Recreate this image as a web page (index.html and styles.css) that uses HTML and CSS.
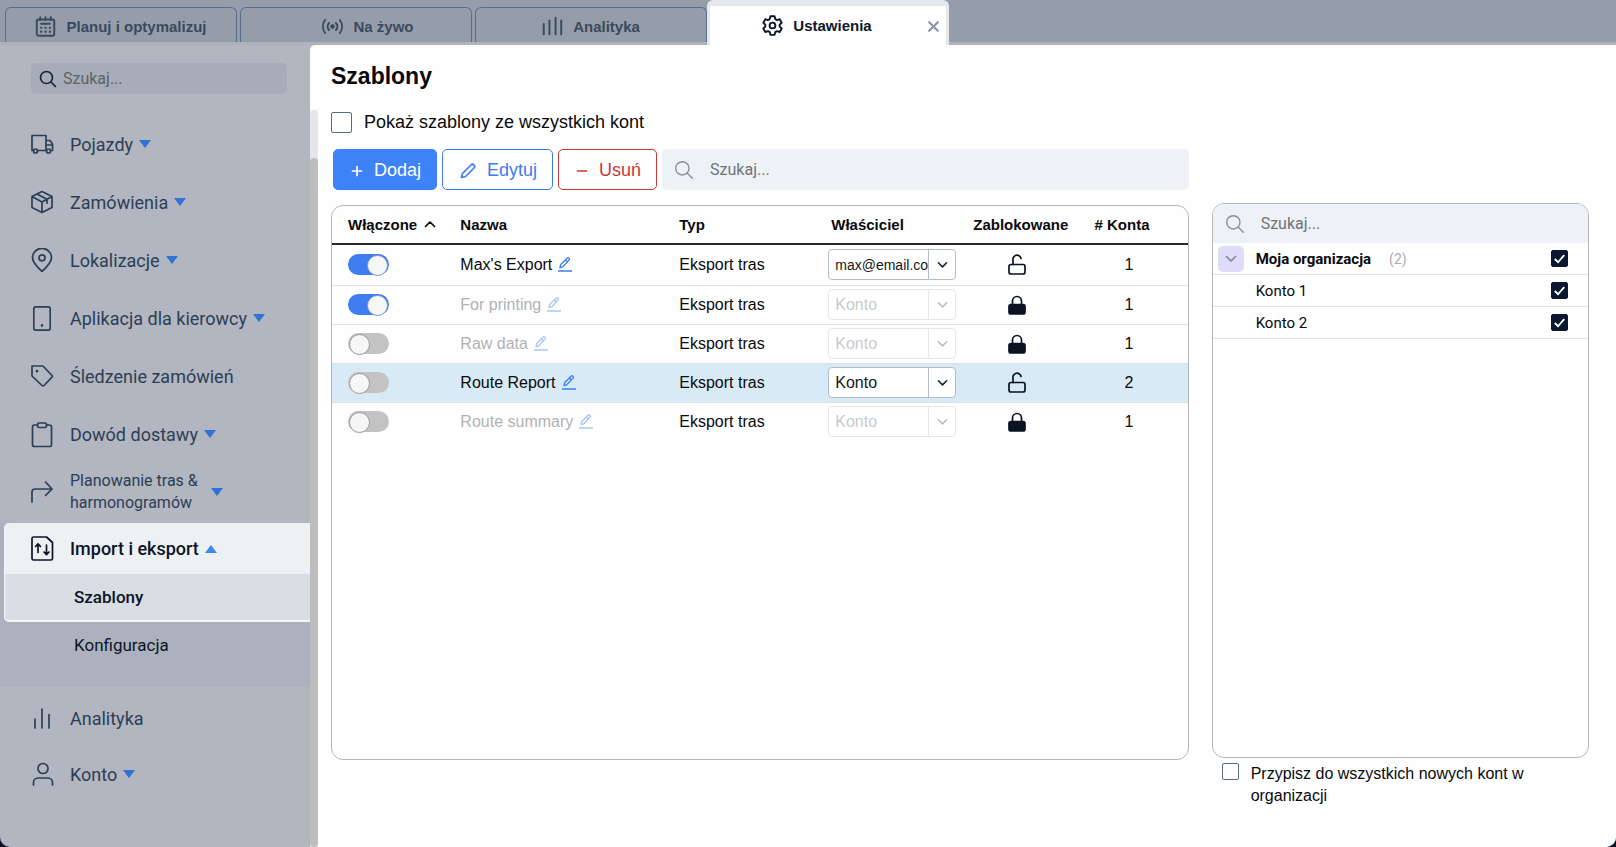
FILE: index.html
```
<!DOCTYPE html>
<html lang="pl">
<head>
	<meta charset="utf-8">
	<meta name="viewport" content="width=device-width, initial-scale=1">
	<title>Szablony</title>
	<link rel="stylesheet" href="styles.css">
</head>
<body>

<!-- icons -->
<svg class="sprite" aria-hidden="true">
	<symbol id="i-search" viewBox="0 0 24 24"><circle cx="10" cy="10" r="8"/><path d="M16 16l6 6"/></symbol>
	<symbol id="i-calendar" viewBox="0 0 24 24"><rect x="2" y="4" width="20" height="18.500" rx="2"/><path d="M6 1.500v3M18 1.500v3M12 1.500v3M7 8.800h10"/><path d="M7 13.500h.2M12 13.500h.2M17 13.500h.2M7 18h.2M12 18h.2M17 18h.2" stroke-width="2.600"/></symbol>
	<symbol id="i-live" viewBox="0 0 24 24"><circle cx="12" cy="12" r="1.500" fill="currentColor"/><path d="M8 8a6 6 0 0 0 0 8M16 8a6 6 0 0 1 0 8M3.500 4.500a13 13 0 0 0 0 15M20.500 4.500a13 13 0 0 1 0 15"/></symbol>
	<symbol id="i-bars4" viewBox="0 0 24 24"><path d="M2 9v12M8.500 5v16M15.500 2v19M22 5v16"/></symbol>
	<symbol id="i-gear" viewBox="0 0 24 24"><circle cx="12" cy="12" r="3.300"/><path d="M9.600 1.500h4.800l.7 3.100 2 1.200 3.100-1 2.300 4-2.300 2.200v2.200l2.300 2.200-2.300 4-3.100-1-2 1.200-.7 3.100H9.600l-.7-3.100-2-1.200-3.100 1-2.300-4 2.300-2.200v-2.200L1.500 8.800l2.300-4 3.100 1 2-1.200z"/></symbol>
	<symbol id="i-close" viewBox="0 0 24 24"><path d="M4 4l16 16M20 4L4 20"/></symbol>
	<symbol id="i-truck" viewBox="0 0 24 24"><path d="M3.500 18.500H2V3.500h14v15H7.500M16 8.500h4l2.500 3.500v6.500h-1.500M16 13h6.500"/><circle cx="5.500" cy="19" r="2"/><circle cx="18.500" cy="19" r="2"/></symbol>
	<symbol id="i-box" viewBox="0 0 24 24"><path d="M12 1.500l10 5v11l-10 5-10-5v-11zM2 6.500l10 5.500 10-5.500M12 12v10.500M7 4l10 5.200v4"/></symbol>
	<symbol id="i-pin" viewBox="0 0 24 24"><path d="M12 23.500C6 18 2.500 14 2.500 9.800a9.500 9.500 0 0 1 19 0C21.500 14 18 18 12 23.500z"/><circle cx="12" cy="9.800" r="3"/></symbol>
	<symbol id="i-phone" viewBox="0 0 24 28"><rect x="3.500" y="2" width="17" height="24" rx="2"/><path d="M12 21v.2" stroke-width="2.500"/></symbol>
	<symbol id="i-tag" viewBox="0 0 24 24"><path d="M2 2h11l9 9.500c.5.500.5 1.200 0 1.700L14 21.500c-.6.600-1.500.6-2 0L2 12z"/><path d="M7 7v.2" stroke-width="2.600"/></symbol>
	<symbol id="i-clip" viewBox="0 0 24 26"><path d="M7.500 3.500H4.500a2 2 0 0 0-2 2V23a2 2 0 0 0 2 2h15a2 2 0 0 0 2-2V5.500a2 2 0 0 0-2-2h-3"/><rect x="7.500" y="1.500" width="9" height="4.500" rx="1.500"/></symbol>
	<symbol id="i-turn" viewBox="0 0 24 24"><path d="M2 22V12a3 3 0 0 1 3-3h17M15.500 2l6.500 7-6.500 6.500"/></symbol>
	<symbol id="i-impexp" viewBox="0 0 24 26"><path d="M3.500 1.500h13l6 5.500v16a1.500 1.500 0 0 1-1.500 1.500H3.500A1.500 1.500 0 0 1 2 23V3a1.500 1.500 0 0 1 1.500-1.500zM8 17V8.500M5.500 11L8 8.300l2.500 2.700M16.500 9.500V19M14 16.500l2.500 2.700 2.500-2.700"/></symbol>
	<symbol id="i-bars3" viewBox="0 0 24 24"><path d="M5 13v9M12 3v19M19 8.500v13.500"/></symbol>
	<symbol id="i-user" viewBox="0 0 24 24"><circle cx="13" cy="6.500" r="5"/><path d="M3.500 23v-2.500a4.500 4.500 0 0 1 4.500-4.500h10a4.500 4.500 0 0 1 4.500 4.500V23"/></symbol>
	<symbol id="i-down" viewBox="0 0 12 8"><path d="M0 0h12L6 8z"/></symbol>
	<symbol id="i-up" viewBox="0 0 12 8"><path d="M0 8h12L6 0z"/></symbol>
	<symbol id="i-chev" viewBox="0 0 12 8"><path d="M1.500 1.500L6 6l4.500-4.500"/></symbol>
	<symbol id="i-chevup" viewBox="0 0 12 8"><path d="M1.500 6.500L6 2l4.500 4.500"/></symbol>
	<symbol id="i-pencil" viewBox="0 0 16 16"><path d="M1.500 14.500l1-4 8.500-8.500a2 2 0 0 1 3 3L5.500 13.500z"/></symbol>
	<symbol id="i-edit" viewBox="0 0 14 15"><path d="M2 10.500l.8-3L9 1.300a1.200 1.200 0 0 1 2 1.800L4.800 9.800zM7.500 3l2 2M0 14h14"/></symbol>
	<symbol id="i-plus" viewBox="0 0 12 12"><path d="M6 1.500v9M1.500 6h9"/></symbol>
	<symbol id="i-minus" viewBox="0 0 12 12"><path d="M1.500 6h9"/></symbol>
	<symbol id="i-unlock" viewBox="0 0 20 22"><rect x="2" y="10.500" width="16" height="9.500" rx="2"/><path d="M6 10.500V6a4 4 0 0 1 8-1.500"/></symbol>
	<symbol id="i-lock" viewBox="0 0 20 22"><rect x="2" y="10.500" width="16" height="9.500" rx="2" fill="currentColor"/><path d="M5.500 10.500V7a4.500 4.500 0 0 1 9 0v3.500"/></symbol>
</svg>

<div class="app">
	<nav class="tabs">
		<button type="button" class="tab"><svg class="icon tab-icon"><use href="#i-calendar"/></svg>Planuj i optymalizuj</button>
		<button type="button" class="tab tab-live"><svg class="icon tab-icon"><use href="#i-live"/></svg>Na żywo</button>
		<button type="button" class="tab"><svg class="icon tab-icon"><use href="#i-bars4"/></svg>Analityka</button>
		<div class="tab-active">
			<button type="button" class="tab-label"><svg class="icon tab-icon"><use href="#i-gear"/></svg>Ustawienia</button>
			<button type="button" class="tab-close" aria-label="Zamknij"><svg class="icon"><use href="#i-close"/></svg></button>
		</div>
	</nav>

	<div class="page">
		<aside class="sidebar">
			<label class="side-search">
				<svg class="icon"><use href="#i-search"/></svg>
				<input type="text" placeholder="Szukaj..." aria-label="Szukaj w menu">
			</label>
			<ul class="menu">
				<li><a class="item" href="#"><svg class="icon"><use href="#i-truck"/></svg><span>Pojazdy</span><svg class="arrow"><use href="#i-down"/></svg></a></li>
				<li><a class="item" href="#"><svg class="icon"><use href="#i-box"/></svg><span>Zamówienia</span><svg class="arrow"><use href="#i-down"/></svg></a></li>
				<li><a class="item" href="#"><svg class="icon"><use href="#i-pin"/></svg><span>Lokalizacje</span><svg class="arrow"><use href="#i-down"/></svg></a></li>
				<li><a class="item" href="#"><svg class="icon tall"><use href="#i-phone"/></svg><span>Aplikacja dla kierowcy</span><svg class="arrow"><use href="#i-down"/></svg></a></li>
				<li><a class="item" href="#"><svg class="icon"><use href="#i-tag"/></svg><span>Śledzenie zamówień</span></a></li>
				<li><a class="item" href="#"><svg class="icon tall"><use href="#i-clip"/></svg><span>Dowód dostawy</span><svg class="arrow"><use href="#i-down"/></svg></a></li>
				<li><a class="item two-lines" href="#"><svg class="icon"><use href="#i-turn"/></svg><span>Planowanie tras &amp;<br>harmonogramów</span><svg class="arrow"><use href="#i-down"/></svg></a></li>
			</ul>
			<div class="group">
				<div class="current">
					<a class="item" href="#"><svg class="icon tall"><use href="#i-impexp"/></svg><span>Import i eksport</span><svg class="arrow"><use href="#i-up"/></svg></a>
					<a class="sub selected" href="#">Szablony</a>
				</div>
				<a class="sub" href="#">Konfiguracja</a>
			</div>
			<ul class="menu menu-end">
				<li><a class="item" href="#"><svg class="icon"><use href="#i-bars3"/></svg><span>Analityka</span></a></li>
				<li><a class="item" href="#"><svg class="icon"><use href="#i-user"/></svg><span>Konto</span><svg class="arrow"><use href="#i-down"/></svg></a></li>
			</ul>
		</aside>

		<main class="content">
			<div class="track"><div class="thumb"></div></div>

			<section class="templates">
				<h1>Szablony</h1>
				<div class="show-all">
					<input type="checkbox" class="box" id="all">
					<label for="all">Pokaż szablony ze wszystkich kont</label>
				</div>
				<div class="toolbar">
					<button type="button" class="btn add"><svg class="icon small"><use href="#i-plus"/></svg>Dodaj</button>
					<button type="button" class="btn edit"><svg class="icon"><use href="#i-pencil"/></svg>Edytuj</button>
					<button type="button" class="btn del"><svg class="icon small"><use href="#i-minus"/></svg>Usuń</button>
					<label class="search">
						<svg class="icon"><use href="#i-search"/></svg>
						<input type="text" placeholder="Szukaj..." aria-label="Szukaj szablonu">
					</label>
				</div>

				<div class="panel">
					<table>
						<colgroup><col class="c-on"><col class="c-name"><col class="c-type"><col class="c-owner"><col class="c-lock"><col class="c-count"></colgroup>
						<thead>
							<tr><th class="on">Włączone <svg class="icon sort"><use href="#i-chevup"/></svg></th><th>Nazwa</th><th class="type">Typ</th><th class="owner">Właściciel</th><th class="lock">Zablokowane</th><th class="count"># Konta</th></tr>
						</thead>
						<tbody>
							<tr>
								<td class="on"><input type="checkbox" class="toggle" aria-label="Włączone" checked></td>
								<td><span class="name">Max's Export<svg class="icon pen"><use href="#i-edit"/></svg></span></td>
								<td class="type">Eksport tras</td>
								<td><div class="select email"><select aria-label="Właściciel"><option>max@email.com</option></select><span class="caret"><svg class="icon"><use href="#i-chev"/></svg></span></div></td>
								<td class="lock"><svg class="icon"><use href="#i-unlock"/></svg></td>
								<td class="count">1</td>
							</tr>
							<tr class="off">
								<td class="on"><input type="checkbox" class="toggle" aria-label="Włączone" checked></td>
								<td><span class="name">For printing<svg class="icon pen"><use href="#i-edit"/></svg></span></td>
								<td class="type">Eksport tras</td>
								<td><div class="select"><select aria-label="Właściciel" disabled><option>Konto</option></select><span class="caret"><svg class="icon"><use href="#i-chev"/></svg></span></div></td>
								<td class="lock"><svg class="icon"><use href="#i-lock"/></svg></td>
								<td class="count">1</td>
							</tr>
							<tr class="off">
								<td class="on"><input type="checkbox" class="toggle" aria-label="Włączone"></td>
								<td><span class="name">Raw data<svg class="icon pen"><use href="#i-edit"/></svg></span></td>
								<td class="type">Eksport tras</td>
								<td><div class="select"><select aria-label="Właściciel" disabled><option>Konto</option></select><span class="caret"><svg class="icon"><use href="#i-chev"/></svg></span></div></td>
								<td class="lock"><svg class="icon"><use href="#i-lock"/></svg></td>
								<td class="count">1</td>
							</tr>
							<tr class="picked">
								<td class="on"><input type="checkbox" class="toggle" aria-label="Włączone"></td>
								<td><span class="name">Route Report<svg class="icon pen"><use href="#i-edit"/></svg></span></td>
								<td class="type">Eksport tras</td>
								<td><div class="select"><select aria-label="Właściciel"><option>Konto</option></select><span class="caret"><svg class="icon"><use href="#i-chev"/></svg></span></div></td>
								<td class="lock"><svg class="icon"><use href="#i-unlock"/></svg></td>
								<td class="count">2</td>
							</tr>
							<tr class="off">
								<td class="on"><input type="checkbox" class="toggle" aria-label="Włączone"></td>
								<td><span class="name">Route summary<svg class="icon pen"><use href="#i-edit"/></svg></span></td>
								<td class="type">Eksport tras</td>
								<td><div class="select"><select aria-label="Właściciel" disabled><option>Konto</option></select><span class="caret"><svg class="icon"><use href="#i-chev"/></svg></span></div></td>
								<td class="lock"><svg class="icon"><use href="#i-lock"/></svg></td>
								<td class="count">1</td>
							</tr>
						</tbody>
					</table>
				</div>
			</section>

			<section class="accounts">
				<div class="panel">
					<label class="search">
						<svg class="icon"><use href="#i-search"/></svg>
						<input type="text" placeholder="Szukaj..." aria-label="Szukaj konta">
					</label>
					<div class="account org">
						<button type="button" class="expand" aria-label="Zwiń"><svg class="icon"><use href="#i-chev"/></svg></button>
						<label for="org">Moja organizacja</label>
						<span class="total">(2)</span>
						<input type="checkbox" class="box" id="org" checked>
					</div>
					<div class="account">
						<label for="k1">Konto 1</label>
						<input type="checkbox" class="box" id="k1" checked>
					</div>
					<div class="account">
						<label for="k2">Konto 2</label>
						<input type="checkbox" class="box" id="k2" checked>
					</div>
				</div>
				<div class="assign">
					<input type="checkbox" class="box" id="assign">
					<label for="assign">Przypisz do wszystkich nowych kont w organizacji</label>
				</div>
			</section>
		</main>
	</div>
</div>
</body>
</html>
```

FILE: styles.css
```
* {
	box-sizing: border-box;
}
body {
	margin: 0;
	background-color: #0b1222;
	color: #0a0a0c;
	font-family: "Liberation Sans", Arial, sans-serif;
	font-size: 16px;
}
button, input, select {
	font-family: inherit;
	margin: 0;
}
button {
	border: 0;
	padding: 0;
	background: none;
}
.sprite {
	display: none;
}
.icon {
	width: 24px;
	height: 24px;
	flex: none;
	fill: none;
	stroke: currentColor;
	stroke-width: 1.7;
	stroke-linecap: round;
	stroke-linejoin: round;
}
.app {
	min-height: 100vh;
	display: flex;
	flex-direction: column;
	border-radius: 0 0 10px 10px;
	overflow: hidden;
	background-color: #b2b6c1;
}

/* tabs */
.tabs {
	display: flex;
	align-items: flex-end;
	gap: 3px;
	height: 45px;
	padding-left: 5px;
	background-color: #959dab;
	box-shadow: inset 0 -3px #adb2bd;
}
.tab {
	display: flex;
	align-items: center;
	justify-content: center;
	gap: 10px;
	flex: 0 1 232px;
	height: 35px;
	margin-bottom: 3px;
	padding-top: 2px;
	border: 1px solid #5a6e89;
	border-bottom: 0;
	border-radius: 6px 6px 0 0;
	color: #3a495b;
	font-size: 15px;
	font-weight: bold;
}
.tab-live {
	padding-left: 24px;
}
.tab-icon {
	width: 21px;
	height: 21px;
	stroke-width: 2.2;
}
.tab-active {
	display: flex;
	flex: 0 1 242px;
	height: 45px;
	margin-left: -3px;
	border: 3px solid #e2e8eb;
	border-top-width: 6px;
	border-bottom: 0;
	border-radius: 6px 6px 0 0;
	background-color: #fefefe;
}
.tab-label {
	display: flex;
	flex: 1;
	align-items: center;
	justify-content: center;
	gap: 10px;
	padding-left: 4px;
	color: #101827;
	font-size: 15px;
	font-weight: bold;
}
.tab-close {
	width: 26px;
	color: #8d95a3;
}
.tab-close .icon {
	width: 13px;
	height: 13px;
	stroke-width: 4;
	vertical-align: middle;
}

/* sidebar */
.page {
	display: flex;
	flex: 1;
}
.sidebar {
	flex: none;
	width: 310px;
	padding-top: 18px;
	font-family: Roboto, sans-serif;
	color: #2c3e54;
}
.side-search {
	display: flex;
	align-items: center;
	gap: 6px;
	height: 31px;
	margin: 0 23px 21px 31px;
	padding: 0 8px;
	border-radius: 5px;
	background-color: #a6acb8;
}
.side-search .icon {
	width: 18px;
	height: 18px;
	color: #18233a;
	stroke-width: 2.2;
}
.side-search input, .search input {
	flex: 1;
	min-width: 0;
	border: 0;
	padding: 0;
	background: none;
	font-family: Roboto, sans-serif;
	font-size: 16px;
}
.side-search input::placeholder {
	color: #5e6268;
}
.menu {
	margin: 0;
	padding: 0 0 2px;
	list-style: none;
}
.item {
	display: flex;
	align-items: center;
	height: 58px;
	padding-left: 30px;
	color: inherit;
	font-size: 18px;
	text-decoration: none;
}
.item span {
	margin: 0 6px 0 16px;
}
.item .tall {
	height: 27px;
}
.arrow {
	width: 12px;
	height: 8px;
	fill: #3272d4;
}
.two-lines {
	font-size: 16px;
	line-height: 22px;
}
.two-lines span {
	margin-right: 13px;
}
.group {
	padding-bottom: 19px;
	background-color: #acb2bd;
	color: #0d1426;
}
.current {
	margin-left: 4px;
	border: 2px solid #f3f7f9;
	border-width: 0 0 2px 1px;
	border-radius: 5px 0 0 5px;
	background-color: #edf1f4;
	overflow: hidden;
}
.current .item {
	height: 51px;
	padding-left: 25px;
	font-weight: 500;
}
.current .arrow {
	fill: #3f86f7;
}
.sub {
	display: block;
	height: 46px;
	padding-left: 74px;
	color: inherit;
	font-size: 17px;
	line-height: 46px;
	text-decoration: none;
}
.selected {
	padding-left: 69px;
	background-color: #d8dee3;
	font-weight: 500;
}
.menu-end {
	padding-top: 3px;
}
.menu-end .item {
	height: 56px;
}

/* content */
.content {
	display: flex;
	flex: 1;
	min-width: 0;
	padding-right: 27px;
	border-top-left-radius: 5px;
	background-color: #fefefe;
}
.track {
	flex: none;
	width: 8px;
	margin: 65px 13px 0 0;
	padding-top: 48px;
	border-radius: 4px 4px 0 0;
	background-color: #e6e6e8;
}
.thumb {
	height: 100%;
	border-radius: 4px;
	background-color: #bdbdbe;
}
.templates {
	display: flex;
	flex-direction: column;
	flex: 25;
	min-width: 0;
	padding-bottom: 87px;
}
h1 {
	margin: 17px 0 0;
	font-size: 23px;
	line-height: 28px;
}
.box {
	appearance: none;
	flex: none;
	width: 17px;
	height: 17px;
	border: 1px solid #5b6b84;
	border-radius: 2px;
	background-color: #fff;
}
.box:checked {
	border-color: #0b1730;
	background: #0b1730 url("data:image/svg+xml,%3Csvg xmlns='http://www.w3.org/2000/svg' viewBox='0 0 16 16' fill='none' stroke='white' stroke-width='2'%3E%3Cpath d='M3 8.500l3.500 3.500L13 4.500'/%3E%3C/svg%3E") center / 15px no-repeat;
}
.show-all {
	display: flex;
	align-items: center;
	gap: 12px;
	margin-top: 22px;
	font-size: 18px;
}
.show-all .box {
	width: 21px;
	height: 21px;
}
.toolbar {
	display: flex;
	gap: 5px;
	margin: 16px 0 15px 2px;
}
.btn {
	display: flex;
	align-items: center;
	justify-content: center;
	gap: 11px;
	height: 41px;
	padding: 2px 15px 0 17px;
	border: 1px solid;
	border-radius: 5px;
	font-size: 18px;
}
.btn .icon {
	width: 16px;
	height: 16px;
}
.btn .small {
	width: 12px;
	height: 12px;
}
.add {
	border-color: #3e82f7;
	background-color: #3e82f7;
	color: #fff;
}
.edit {
	color: #3e7df0;
}
.del {
	color: #c93838;
}
.search {
	display: flex;
	align-items: center;
	flex: 1;
	gap: 16px;
	height: 41px;
	padding: 0 12px;
	border-radius: 5px;
	background-color: #eef1f6;
}
.search .icon {
	width: 20px;
	height: 20px;
	color: #8b8f96;
}
.search input::placeholder {
	color: #6f7378;
}
.panel {
	flex: 1;
	border: 1px solid #b5b7ba;
	border-radius: 12px;
	overflow: hidden;
}

/* templates table */
table {
	width: 100%;
	table-layout: fixed;
	border-collapse: collapse;
}
.c-on { width: 15%; }
.c-name { width: 25%; }
.c-type { width: 18%; }
.c-owner { width: 16%; }
.c-lock { width: 13%; }
.c-count { width: 13%; }
th, td {
	height: 39px;
	padding: 0;
	border-bottom: 1px solid #dfe1e5;
	text-align: left;
}
th {
	height: 38px;
	border-bottom: 2px solid #26282c;
	font-size: 15px;
	white-space: nowrap;
}
tbody tr:first-child td {
	height: 41px;
}
tbody tr:last-child td {
	border-bottom: 0;
}
.on {
	padding-left: 16px;
}
.type {
	padding-left: 5px;
}
th.owner {
	padding-left: 3px;
}
th.lock, td.lock, th.count, td.count {
	text-align: center;
}
td.lock {
	padding-right: 7px;
}
th.count {
	padding-right: 20px;
}
td.count {
	padding-right: 6px;
}
.sort {
	width: 12px;
	height: 8px;
	margin-left: 3px;
	vertical-align: 2px;
}
.picked {
	background-color: #d8eaf5;
}
.toggle {
	appearance: none;
	display: flex;
	width: 41px;
	height: 21px;
	border-radius: 11px;
	background-color: #c3c3c3;
}
.toggle::before {
	content: "";
	width: 19px;
	height: 19px;
	margin: 1px;
	border: 1px solid #999;
	border-radius: 50%;
	background-color: #f6f6f6;
}
.toggle:checked {
	justify-content: flex-end;
	background-color: #3e7ef2;
}
.toggle:checked::before {
	border-color: #7f9bc9;
}
.name {
	display: flex;
	align-items: center;
	gap: 6px;
}
.off .name {
	color: #b1b2b4;
}
.pen {
	width: 14px;
	height: 15px;
	color: #3e7df0;
	stroke-width: 1.3;
}
.off .pen {
	color: #a9c6f8;
}
.select {
	position: relative;
	width: 128px;
}
.select select {
	appearance: none;
	display: block;
	width: 100%;
	height: 31px;
	padding: 0 27px 0 6px;
	border: 1px solid #b3bccb;
	border-radius: 4px;
	background-color: #fff;
	color: #15171c;
	font-size: 16px;
}
.email select {
	font-size: 14px;
}
.caret {
	position: absolute;
	top: 1px;
	right: 1px;
	bottom: 1px;
	width: 27px;
	display: flex;
	align-items: center;
	justify-content: center;
	border-left: 1px solid #b3bccb;
	color: #18233a;
	pointer-events: none;
}
.caret .icon {
	width: 11px;
	height: 8px;
}
.off .select select {
	border-color: #e3e6ec;
	color: #c9cacc;
	opacity: 1;
}
.off .caret {
	border-color: #e3e6ec;
	color: #b9bdc4;
}
.lock .icon {
	display: block;
	width: 20px;
	height: 22px;
	margin: 0 auto;
	color: #0b1222;
}

/* accounts */
.accounts {
	display: flex;
	flex-direction: column;
	flex: 11;
	min-width: 0;
	margin-left: 23px;
	padding: 158px 0 40px;
	font-size: 16px;
}
.accounts .panel {
	display: flex;
	flex-direction: column;
	font-family: Roboto, sans-serif;
	font-size: 15px;
}
.accounts .search {
	flex: none;
	height: 39px;
	border-radius: 0;
}
.account {
	display: flex;
	align-items: center;
	height: 32px;
	padding: 0 20px 0 43px;
	border-bottom: 1px solid #e2e3ee;
}
.account .box {
	margin-left: auto;
}
.org {
	padding-left: 5px;
}
.org label {
	font-weight: bold;
}
.expand {
	width: 26px;
	height: 26px;
	margin-right: 12px;
	border-radius: 5px;
	background-color: #dfdcfa;
	color: #85839c;
}
.expand .icon {
	display: block;
	width: 12px;
	height: 8px;
	margin: 0 auto;
}
.total {
	margin-left: 18px;
	color: #adadb2;
	font-size: 14px;
}
.assign {
	display: flex;
	gap: 12px;
	padding: 5px 50px 0 10px;
	line-height: 22px;
}
```
